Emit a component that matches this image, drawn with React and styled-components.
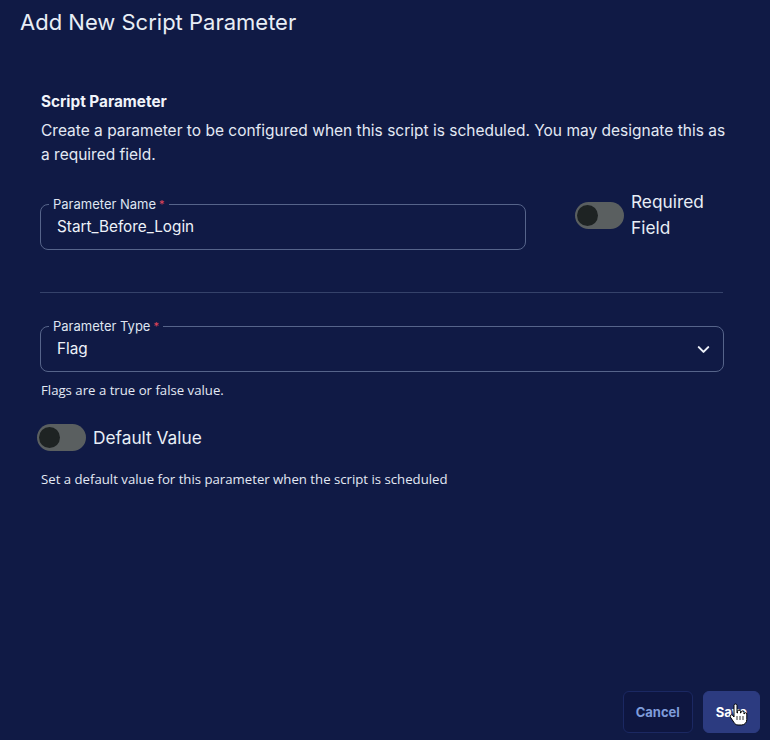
import styled, { createGlobalStyle } from 'styled-components'
import { ChevronDown } from 'lucide-react'

const GlobalStyle = createGlobalStyle`
  html, body {
    margin: 0;
    padding: 0;
    background: #101a45;
  }
  * {
    box-sizing: border-box;
  }
`

const Page = styled.div`
  min-height: 100vh;
  display: flex;
  flex-direction: column;
  background: #101a45;
  color: #e6edf7;
  font-family: Inter, "Noto Sans", sans-serif;
`

const Title = styled.h1`
  margin: 0;
  padding: 8px 20px 0;
  font-size: 22px;
  line-height: 28px;
  font-weight: 400;
  color: #e8eef6;
`

const Body = styled.div`
  display: flex;
  flex-direction: column;
  padding: 56px 47px 0 40px;
`

const SectionTitle = styled.h2`
  margin: 0 0 0 1px;
  font-size: 15.3px;
  line-height: 20px;
  font-weight: 700;
  color: #f1f4fa;
`

const Description = styled.p`
  margin: 7px 0 0 1px;
  width: 692px;
  font-size: 15.5px;
  line-height: 24px;
  color: #e3e9f4;
`

const NameRow = styled.div`
  display: flex;
  align-items: flex-start;
  margin-top: 22px;
`

const Outlined = styled.div`
  position: relative;
  flex: 0 0 486px;
  height: 46px;
  margin-top: ${p => p.$offset || 0}px;
  border: 1px solid #56648a;
  border-radius: 8px;
  display: flex;
  align-items: center;
  justify-content: space-between;
  padding: 0 10px 0 16px;
`

const FieldLabel = styled.span`
  position: absolute;
  top: -9px;
  left: 8px;
  padding: 0 4px;
  background: #101a45;
  font-size: 13px;
  line-height: 16px;
  color: #dfe5f1;
`

const Star = styled.span`
  color: #e2455a;
  margin-left: 3px;
  font-size: 11px;
  vertical-align: top;
`

const FieldValue = styled.span`
  font-size: 15.3px;
  line-height: 20px;
  color: #eef2f9;
`

const Switch = styled.span`
  flex: 0 0 auto;
  width: 49px;
  height: 27px;
  border-radius: 14px;
  background: #5a5f60;
  display: flex;
  align-items: center;
  padding-left: 2px;
  margin-top: ${p => p.$offset || 0}px;
  margin-left: ${p => p.$gap || 0}px;

  &::before {
    content: '';
    width: 21px;
    height: 21px;
    border-radius: 50%;
    background: #1e2323;
  }
`

const SwitchLabel = styled.span`
  font-size: 17.3px;
  line-height: 26px;
  color: #e8eef6;
  margin-left: 7px;
  width: ${p => (p.$narrow ? '80px' : 'auto')};
`

const Divider = styled.hr`
  margin: 42px 0 0;
  border: 0;
  border-top: 1px solid #35426a;
  width: 683px;
`

const SelectBox = styled(Outlined)`
  margin-top: 33px;
  flex: none;
  width: 684px;
`

const Helper = styled.p`
  margin: ${p => p.$top}px 0 0 1px;
  font-family: "Open Sans", "Noto Sans", sans-serif;
  font-size: 13.2px;
  line-height: 16px;
  color: #e3e9f4;
`

const ToggleRow = styled.div`
  display: flex;
  align-items: center;
  margin: 26px 0 0 -3px;
`

const Footer = styled.div`
  margin-top: auto;
  display: flex;
  justify-content: flex-end;
  gap: 10px;
  padding: 0 10px 7px 0;
`

const Button = styled.button`
  position: relative;
  height: 42px;
  padding: 0 12px;
  border-radius: 6px;
  border: 1px solid ${p => (p.$primary ? '#2c3b80' : '#1b2862')};
  background: ${p => (p.$primary ? '#2c3b80' : '#0e1640')};
  color: ${p => (p.$primary ? '#ffffff' : '#7e9cdb')};
  font-family: Inter, "Noto Sans", sans-serif;
  font-size: 13px;
  font-weight: 700;
`

const Pointer = styled.svg`
  position: absolute;
  left: 24px;
  top: 11px;
`

const HandCursor = () => (
  <Pointer width="20" height="25" viewBox="0 0 20 25">
    <path
      d="M6 2.5a1.5 1.5 0 0 1 3 0V10h.5V8.5a1.5 1.5 0 0 1 3 0V10h.5V9.5a1.5 1.5 0 0 1 3 0V11h.2a1.3 1.3 0 0 1 2.6 0v5.5c0 3-2 5.5-5.5 5.5H10c-2 0-3-1-4-2.5L2.3 14a1.4 1.4 0 0 1 2.2-1.7L6 14Z"
      fill="#ffffff"
      stroke="#000000"
      strokeWidth="1"
      strokeLinejoin="round"
    />
    <path d="M9 13v4M12 13v4M15 13v4" stroke="#000" strokeWidth="0.8" />
  </Pointer>
)

const App = () => {
  return (
    <Page>
      <GlobalStyle />
      <Title>Add New Script Parameter</Title>
      <Body>
        <SectionTitle>Script Parameter</SectionTitle>
        <Description>
          Create a parameter to be configured when this script is scheduled. You may designate this as a required field.
        </Description>

        <NameRow>
          <Outlined $offset={15}>
            <FieldLabel>Parameter Name<Star>*</Star></FieldLabel>
            <FieldValue>Start_Before_Login</FieldValue>
          </Outlined>
          <Switch $offset={13} $gap={49} />
          <SwitchLabel $narrow>Required Field</SwitchLabel>
        </NameRow>

        <Divider />

        <SelectBox>
          <FieldLabel>Parameter Type<Star>*</Star></FieldLabel>
          <FieldValue>Flag</FieldValue>
          <ChevronDown size={19} strokeWidth={2.6} color="#eef2f9" />
        </SelectBox>
        <Helper $top={10}>Flags are a true or false value.</Helper>

        <ToggleRow>
          <Switch />
          <SwitchLabel>Default Value</SwitchLabel>
        </ToggleRow>
        <Helper $top={20}>Set a default value for this parameter when the script is scheduled</Helper>
      </Body>

      <Footer>
        <Button>Cancel</Button>
        <Button $primary>
          Save
          <HandCursor />
        </Button>
      </Footer>
    </Page>
  )
}

export default App
